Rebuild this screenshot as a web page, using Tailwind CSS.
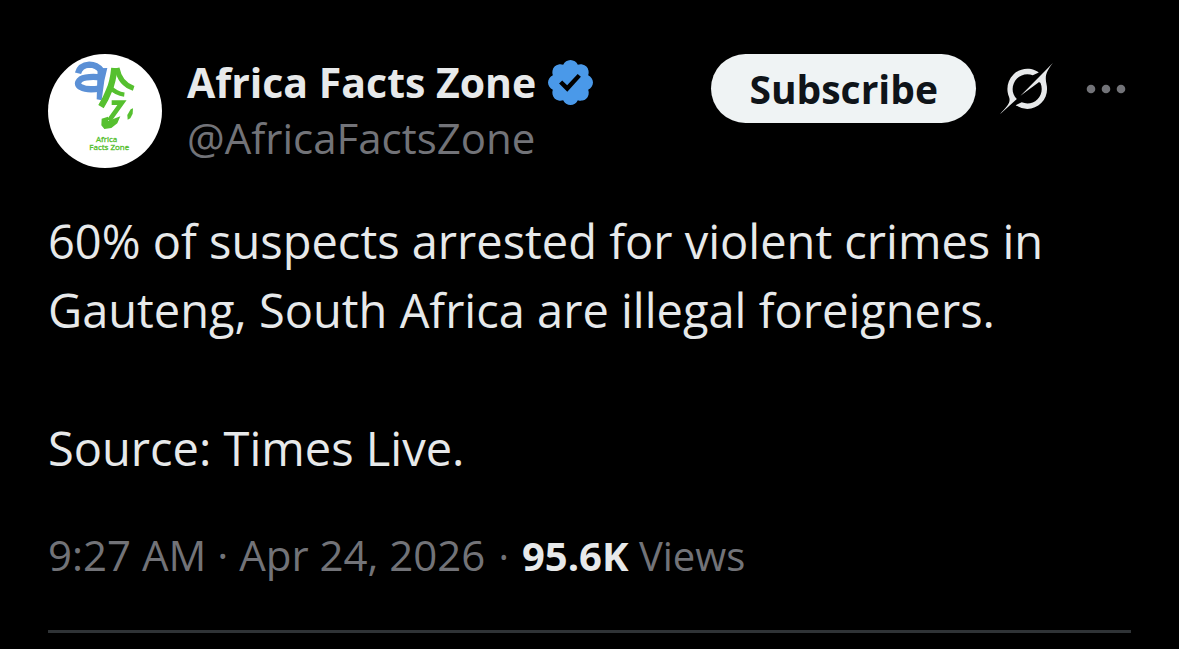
<!DOCTYPE html>
<html lang="en">
<head>
    <meta charset="UTF-8">
    <meta name="viewport" content="width=device-width, initial-scale=1.0">
    <title>Africa Facts Zone</title>
    <script src="https://cdn.jsdelivr.net/npm/@tailwindcss/browser@4"></script>
</head>
<body class="bg-black font-['Open_Sans','Noto_Sans',sans-serif] text-[#e7e9ea]">
    <article class="px-12 pt-[54px]">
        <!-- Author -->
        <header class="flex items-start">
            <svg class="size-[114px] shrink-0 rounded-full bg-white" viewBox="24 24 342 342" role="img" aria-label="Africa Facts Zone logo">
                <g fill="none" stroke="#5b90d6" stroke-linejoin="round">
                    <path d="M114 82 Q120 58 148 56 Q170 56 184 74" stroke-width="19"/>
                    <path d="M182 94 Q140 90 122 100 Q106 113 122 123 Q142 134 180 127" stroke-width="19"/>
                    <path d="M173 67 L202 66 L193 104 L185 163 L170 160 Z" fill="#5b90d6" stroke="none"/>
                </g>
                <g fill="none" stroke="#56c02f">
                    <path d="M223 66 Q219 108 207 134 Q199 156 183 182" stroke-width="19"/>
                    <path d="M231 66 Q240 114 281 127" stroke-width="15"/>
                    <path d="M210 124 Q228 143 253 146" stroke-width="13"/>
                    <path d="M215 170 L246 170 L207 224" stroke-width="14"/>
                    <path d="M185 218 L204 212 L204 225 L241 211 L232 232 L214 246 L193 249 L184 238 Z" fill="#56c02f" stroke="none"/>
                    <path d="M272 190 L279 187 L278 203 L271 217 L263 221 L262 207 Z" fill="#56c02f" stroke="none"/>
                </g>
                <g fill="#56c02f" stroke="#56c02f" font-family="Open Sans, sans-serif" font-size="24">
                    <text x="168" y="289">Africa</text>
                    <text x="148" y="311">Facts Zone</text>
                </g>
            </svg>
            <div class="ml-[25px] flex flex-col">
                <div class="flex h-14 items-center gap-3">
                    <h1 class="text-[41px] leading-14 font-bold whitespace-nowrap">Africa Facts Zone</h1>
                    <svg class="size-[45px] shrink-0" viewBox="1.6 1.6 18.8 18.8" fill="#4a99e9" role="img" aria-label="Verified account">
                        <path d="M20.396 11c-.018-.646-.215-1.275-.57-1.816-.354-.54-.852-.972-1.438-1.246.223-.607.27-1.264.14-1.897-.131-.634-.437-1.218-.882-1.687-.47-.445-1.053-.75-1.687-.882-.633-.13-1.29-.083-1.897.14-.273-.587-.704-1.086-1.245-1.44S11.647 1.62 11 1.604c-.646.017-1.273.213-1.813.568s-.969.854-1.24 1.44c-.608-.223-1.267-.272-1.902-.14-.635.13-1.22.436-1.69.882-.445.47-.749 1.055-.878 1.688-.13.633-.08 1.29.144 1.896-.587.274-1.087.705-1.443 1.245-.356.54-.555 1.17-.574 1.817.02.647.218 1.276.574 1.817.356.54.856.972 1.443 1.245-.224.606-.274 1.263-.144 1.896.13.634.433 1.218.877 1.688.47.443 1.054.747 1.687.878.633.132 1.29.084 1.897-.136.274.586.705 1.084 1.246 1.439.54.354 1.17.551 1.816.569.647-.016 1.276-.213 1.817-.567s.972-.854 1.245-1.44c.604.239 1.266.296 1.903.164.636-.132 1.22-.447 1.68-.907.46-.46.776-1.044.908-1.681s.075-1.299-.165-1.903c.586-.274 1.084-.705 1.439-1.246.354-.54.551-1.17.569-1.816zM9.662 14.85l-3.429-3.428 1.293-1.302 2.072 2.072 4.4-4.794 1.347 1.246z"/>
                    </svg>
                </div>
                <a href="#" class="text-[42px] leading-14 text-[#727378]">@AfricaFactsZone</a>
            </div>
            <div class="ml-auto flex items-center">
                <button type="button" class="h-[69px] rounded-full bg-[#eff3f4] px-[38px] text-[39px] leading-none font-bold text-[#0f1419]">Subscribe</button>
                <button type="button" class="ml-6" aria-label="Explain this post">
                    <svg class="size-[53px]" viewBox="0 0 33 32" fill="currentColor">
                        <path d="M12.745 20.54l10.97-8.19c.539-.4 1.307-.244 1.564.38 1.349 3.288.746 7.241-1.938 9.955-2.683 2.714-6.417 3.31-9.83 1.954l-3.728 1.745c5.347 3.697 11.84 2.782 15.898-1.324 3.219-3.255 4.216-7.692 3.284-11.693l.008.009c-1.351-5.878.332-8.227 3.782-13.031L33 0l-4.54 4.59v-.014L12.743 20.544m-2.263 1.987c-3.837-3.707-3.175-9.446.1-12.755 2.42-2.449 6.388-3.448 9.852-1.979l3.72-1.737c-.67-.49-1.53-1.017-2.515-1.387-4.455-1.854-9.789-.931-13.41 2.728-3.483 3.523-4.579 8.94-2.697 13.561 1.405 3.454-.899 5.898-3.22 8.364C1.49 30.2.666 31.074 0 32l10.478-9.466"/>
                    </svg>
                </button>
                <button type="button" class="mr-[5px] ml-[33px] text-[#727378]" aria-label="More">
                    <svg class="h-[10px] w-10" viewBox="0 0 40 10" fill="currentColor">
                        <circle cx="5" cy="5" r="4.3"/>
                        <circle cx="20" cy="5" r="4.3"/>
                        <circle cx="35" cy="5" r="4.3"/>
                    </svg>
                </button>
            </div>
        </header>

        <!-- Post text -->
        <div class="mt-[39px] text-[47px] leading-[69px]">
            <p>60% of suspects arrested for violent crimes in Gauteng, South Africa are illegal foreigners.</p>
            <p class="mt-[69px]">Source: Times Live.</p>
        </div>

        <!-- Time and views -->
        <div class="mt-11 flex flex-wrap items-baseline gap-x-[13px] border-b-3 border-[#2f3336] pb-[46px] text-[40px] leading-14 text-[#727378]">
            <a href="#" class="text-[42px]"><time datetime="2026-04-24T09:27">9:27 AM · Apr 24, 2026</time></a>
            <span>·</span>
            <span><span class="font-bold text-[#e7e9ea]">95.6K</span> Views</span>
        </div>
    </article>
</body>
</html>
